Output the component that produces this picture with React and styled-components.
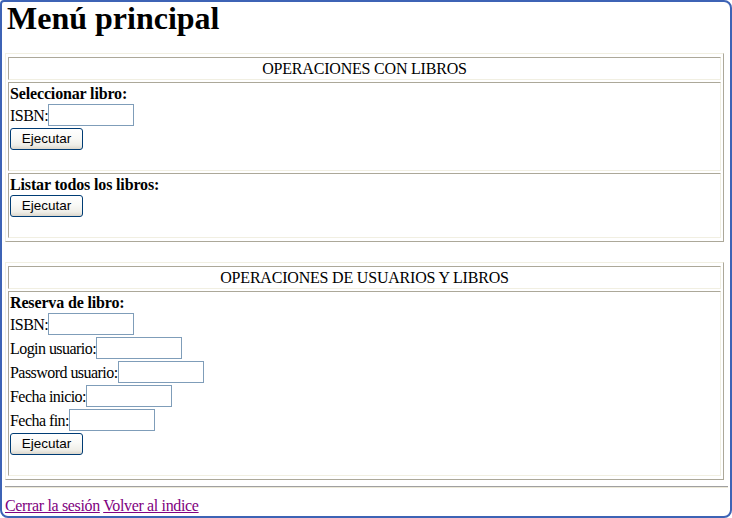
import React from 'react';
import styled, { createGlobalStyle } from 'styled-components';

const GlobalStyle = createGlobalStyle`
  html, body {
    margin: 0;
    padding: 0;
    background: #ffffff;
  }
  body {
    font-family: "Liberation Serif", "Times New Roman", serif;
    font-size: 16px;
    color: #000;
  }
`;

const App = () => {
    return (
        <>
            <GlobalStyle />
            <Window>
                <Title>Menú principal</Title>

                <Panel>
                    <HeaderCell>OPERACIONES CON LIBROS</HeaderCell>
                    <Cell>
                        <Label>Seleccionar libro:</Label>
                        <FieldRow>
                            ISBN:<TextBox type="text" />
                        </FieldRow>
                        <FieldRow>
                            <RunButton type="button">Ejecutar</RunButton>
                        </FieldRow>
                    </Cell>
                    <Cell>
                        <Label>Listar todos los libros:</Label>
                        <FieldRow>
                            <RunButton type="button">Ejecutar</RunButton>
                        </FieldRow>
                    </Cell>
                </Panel>

                <Panel $gap={20}>
                    <HeaderCell>OPERACIONES DE USUARIOS Y LIBROS</HeaderCell>
                    <Cell>
                        <Label>Reserva de libro:</Label>
                        <FieldRow>
                            ISBN:<TextBox type="text" />
                        </FieldRow>
                        <FieldRow>
                            Login usuario:<TextBox type="text" />
                        </FieldRow>
                        <FieldRow>
                            Password usuario:<TextBox type="password" />
                        </FieldRow>
                        <FieldRow>
                            Fecha inicio:<TextBox type="text" />
                        </FieldRow>
                        <FieldRow>
                            Fecha fin:<TextBox type="text" />
                        </FieldRow>
                        <FieldRow>
                            <RunButton type="button">Ejecutar</RunButton>
                        </FieldRow>
                    </Cell>
                </Panel>

                <Rule />

                <Footer>
                    <FooterLink href="#">Cerrar la sesión</FooterLink>{' '}
                    <FooterLink href="#">Volver al indice</FooterLink>
                </Footer>
            </Window>
        </>
    );
};

// marco de la ventana
const Window = styled.div`
  width: 732px;
  height: 518px;
  box-sizing: border-box;
  border: 2px solid #3d63b5;
  border-radius: 4px 8px 8px 8px;
  padding: 0 2px 0 3px;
  overflow: hidden;
`;

const Title = styled.h1`
  margin: 0;
  padding-left: 2px;
  font-size: 32px;
  line-height: 32px;
  font-weight: bold;
`;

// tabla con borde estilo clásico
const Panel = styled.div`
  width: 719px;
  box-sizing: border-box;
  margin-top: ${(p) => p.$gap ?? 19}px;
  border: 1px solid;
  border-color: #f1efe2 #aca899 #aca899 #f1efe2;
  padding: 3px 2px;
  display: flex;
  flex-direction: column;
  gap: 2px;
`;

const Cell = styled.div`
  border: 1px solid;
  border-color: #aca899 #f1efe2 #f1efe2 #aca899;
  padding: 1px 1px 18px;
`;

const HeaderCell = styled.div`
  border: 1px solid;
  border-color: #aca899 #f1efe2 #f1efe2 #aca899;
  height: 21px;
  line-height: 21px;
  text-align: center;
  letter-spacing: -0.2px;
`;

const Label = styled.div`
  font-weight: bold;
  line-height: 20px;
  height: 20px;
  letter-spacing: -0.15px;
`;

const FieldRow = styled.div`
  display: flex;
  align-items: flex-start;
  height: 24px;
  line-height: 24px;
  white-space: nowrap;
  letter-spacing: -0.55px;
`;

const TextBox = styled.input`
  box-sizing: border-box;
  width: 86px;
  height: 22px;
  margin: 0;
  padding: 1px 2px;
  border: 1px solid #7f9db9;
  background: #fff;
  font-family: "Liberation Sans", Arial, sans-serif;
  font-size: 13px;
  outline: none;
`;

const RunButton = styled.button`
  box-sizing: border-box;
  width: 73px;
  height: 22px;
  margin: 0;
  padding: 0;
  border: 1px solid #003c74;
  border-radius: 3px;
  background: linear-gradient(to bottom, #ffffff 0%, #f9f9f6 45%, #efeee8 80%, #dcd7cc 100%);
  font-family: "Liberation Sans", Arial, sans-serif;
  font-size: 13.5px;
  letter-spacing: 0;
  line-height: 20px;
  color: #000;
  cursor: pointer;
`;

const Rule = styled.div`
  margin-top: 6px;
  border-top: 1px solid #a0a0a0;
  border-bottom: 1px solid #ece9d8;
`;

const Footer = styled.div`
  margin-top: 8px;
  line-height: 19px;
  letter-spacing: -0.35px;
`;

const FooterLink = styled.a`
  color: #800080;
  text-decoration: underline;
`;

export default App;
